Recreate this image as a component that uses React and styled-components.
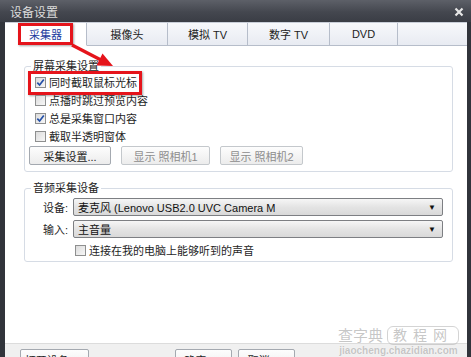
import React from "react";
import styled, { createGlobalStyle, css } from "styled-components";

const GlobalStyle = createGlobalStyle`
  html, body { margin: 0; padding: 0; background: #fff; }
  * { box-sizing: border-box; }
`;

const FONT = `"Liberation Sans", "Noto Sans CJK SC", sans-serif`;
const RED = "#e5141b";

const redBox = css`
  &::after {
    content: "";
    position: absolute;
    border: 3px solid ${RED};
    box-shadow: 1px 1px 2px rgba(0, 0, 0, 0.35);
    pointer-events: none;
  }
`;

//whole dialog with dark frame, cropped at the bottom
const Window = styled.div`
  position: relative;
  width: 471px;
  height: 357px;
  display: flex;
  flex-direction: column;
  overflow: hidden;
  background: #31343b;
  font-family: ${FONT};
  font-size: 11px;
  color: #1e1e1e;
`;

const TitleBar = styled.div`
  height: 22px;
  flex: none;
  display: flex;
  align-items: center;
  justify-content: space-between;
  padding: 1px 7px 0 10px;
  background: linear-gradient(#5d6068, #44474f 55%, #3a3d45);
  color: #dcdcdc;
  font-size: 12px;
`;

const Body = styled.div`
  flex: none;
  height: 361px;
  margin: 0 4px 0 5px;
  background: #fff;
  display: flex;
  flex-direction: column;
`;

const TabStrip = styled.div`
  display: flex;
  height: 24px;
  flex: none;
  border-top: 1px solid #c9ced8;
  background: linear-gradient(#f7f8fb, #e8ebf2);
  border-bottom: 1px solid #b6bdca;
`;

const Tab = styled.div`
  position: relative;
  width: ${(p) => (p.$width ? `${p.$width}px` : "auto")};
  flex: ${(p) => (p.$width ? "none" : "1")};
  display: flex;
  align-items: center;
  justify-content: center;
  border-right: ${(p) => (p.$last ? "none" : "1px solid #b6bdca")};
  color: #222;
  ${(p) =>
    p.$active &&
    css`
      background: #fff;
      color: #1c3c9e;
      margin-bottom: -1px;
      border-bottom: 1px solid #fff;
    `}
  ${(p) =>
    p.$marked &&
    css`
      ${redBox}
      &::after {
        left: 13px;
        right: 13px;
        top: 0;
        bottom: 0;
      }
    `}
`;

const Content = styled.div`
  flex: 1;
  min-height: 0;
  padding: 0 14px 0 19px;
`;

const Group = styled.fieldset`
  margin: ${(p) => p.$top}px 0 0;
  padding: ${(p) => p.$pad};
  border: 1px solid #d6dce5;
  border-radius: 3px;
  min-width: 0;
`;

const Legend = styled.legend`
  padding: 0 2px;
  line-height: 14px;
  color: #222;
`;

const CheckRow = styled.label`
  position: relative;
  display: flex;
  width: fit-content;
  align-items: center;
  height: 18px;
  gap: 3px;
  margin-left: ${(p) => p.$indent || 4}px;
  margin-top: ${(p) => p.$top || 0}px;
  ${(p) =>
    p.$marked &&
    css`
      ${redBox}
      &::after {
        left: -7px;
        right: -5px;
        top: -2px;
        bottom: -4px;
      }
    `}
`;

const Box = styled.span`
  width: 11px;
  height: 11px;
  flex: none;
  border: 1px solid #8e8f8f;
  background: linear-gradient(135deg, #dcdcdc, #f7f7f7);
  display: flex;
  align-items: center;
  justify-content: center;
`;

const ButtonRow = styled.div`
  display: flex;
  gap: 10px;
  margin: 1px 0 0 -2px;
`;

const Button = styled.div`
  width: ${(p) => p.$width}px;
  height: ${(p) => p.$height || 19}px;
  flex: none;
  margin-left: ${(p) => p.$gap || 0}px;
  display: flex;
  align-items: center;
  justify-content: center;
  border: 1px solid ${(p) => (p.$disabled ? "#c4c8cc" : "#a4a9b0")};
  border-radius: 2px;
  background: linear-gradient(#fdfdfd, #ececec);
  color: ${(p) => (p.$disabled ? "#8c8c8c" : "#1e1e1e")};
`;

const FieldRow = styled.div`
  display: flex;
  align-items: center;
  margin-top: ${(p) => p.$top}px;
`;

const FieldLabel = styled.span`
  width: 42px;
  flex: none;
  text-align: right;
  padding-right: 5px;
`;

const Select = styled.div`
  flex: 1;
  height: 18px;
  display: flex;
  align-items: center;
  justify-content: space-between;
  padding: 0 6px 0 4px;
  border: 1px solid #7d7f83;
  border-radius: 2px;
  background: linear-gradient(#f6f6f6, #e4e4e4 50%, #d9d9d9);
  color: #111;
  font-size: 11px;
`;

const Caret = styled.span`
  font-size: 8px;
  color: #111;
`;

const Footer = styled.div`
  flex: none;
  height: 40px;
  display: flex;
  align-items: flex-start;
  gap: 6px;
  padding: 5px 0 0 15px;
  background: #f0f0f0;
  border-top: 1px solid #dcdcdc;
`;

const Watermark = styled.div`
  position: absolute;
  right: 12px;
  bottom: 0;
  display: flex;
  flex-direction: column;
  align-items: center;
  color: rgba(150, 150, 150, 0.55);
  text-shadow: 0 0 1px #fff;
  pointer-events: none;
`;

const MarkTop = styled.div`
  display: flex;
  align-items: center;
  gap: 4px;
  font-size: 15px;
  line-height: 17px;
  span + span {
    border: 1px solid rgba(170, 170, 170, 0.5);
    border-radius: 6px;
    padding: 0 5px;
    letter-spacing: 6px;
    font-size: 14px;
  }
`;

const MarkUrl = styled.div`
  font-size: 10px;
  line-height: 12px;
  font-weight: bold;
`;

const Arrow = styled.svg`
  position: absolute;
  left: 0;
  top: 0;
  pointer-events: none;
`;

const Check = ({ checked }) => (
  <Box>
    {checked && (
      <svg width="9" height="9" viewBox="0 0 9 9">
        <path d="M1.3 4.6 L3.6 7 L7.8 1.4" fill="none" stroke="#2450a8" strokeWidth="1.7" />
      </svg>
    )}
  </Box>
);

const tabs = [
  { name: "采集器", width: 82 },
  { name: "摄像头", width: 81 },
  { name: "模拟 TV", width: 80 },
  { name: "数字 TV", width: 82 },
  { name: "DVD", width: 68 },
];

const screenOpts = [
  { text: "同时截取鼠标光标", checked: true },
  { text: "点播时跳过预览内容", checked: false },
  { text: "总是采集窗口内容", checked: true },
  { text: "截取半透明窗体", checked: false },
];

const App = () => {
  return (
    <>
      <GlobalStyle />
      <Window>
        <TitleBar>
          <span>设备设置</span>
          <svg width="10" height="10" viewBox="0 0 10 10">
            <path d="M1.5 1.5 L8.5 8.5 M8.5 1.5 L1.5 8.5" stroke="#e6e6e6" strokeWidth="2.2" />
          </svg>
        </TitleBar>
        <Body>
          <TabStrip>
            {tabs.map((t, i) => (
              <Tab key={t.name} $width={t.width} $active={i === 0} $marked={i === 0}>
                {t.name}
              </Tab>
            ))}
            <Tab $last />
          </TabStrip>
          <Content>
            <Group $top={13} $pad="0 9px 6px 6px">
              <Legend>屏幕采集设置</Legend>
              {screenOpts.map((o, i) => (
                <CheckRow key={o.text} $marked={i === 0}>
                  <Check checked={o.checked} />
                  {o.text}
                </CheckRow>
              ))}
              <ButtonRow>
                <Button $width={82}>采集设置...</Button>
                <Button $width={89} $disabled>
                  显示 照相机1
                </Button>
                <Button $width={83} $disabled>
                  显示 照相机2
                </Button>
              </ButtonRow>
            </Group>
            <Group $top={9} $pad="0 9px 2px 6px">
              <Legend>音频采集设备</Legend>
              <FieldRow $top={3}>
                <FieldLabel>设备:</FieldLabel>
                <Select>
                  <span>麦克风 (Lenovo USB2.0 UVC Camera M</span>
                  <Caret>▼</Caret>
                </Select>
              </FieldRow>
              <FieldRow $top={4}>
                <FieldLabel>输入:</FieldLabel>
                <Select>
                  <span>主音量</span>
                  <Caret>▼</Caret>
                </Select>
              </FieldRow>
              <CheckRow $indent={44} $top={3}>
                <Check />
                连接在我的电脑上能够听到的声音
              </CheckRow>
            </Group>
          </Content>
          <Footer>
            <Button $width={69} $height={22}>
              打开设备(D)
            </Button>
            <Button $width={57} $height={22} $gap={80}>
              确定(O)
            </Button>
            <Button $width={57} $height={22}>
              取消(C)
            </Button>
          </Footer>
        </Body>
        <Arrow width="471" height="357">
          <line x1="72" y1="45" x2="101" y2="60" stroke={RED} strokeWidth="3.4" />
          <polygon points="113,66 96.5,65.5 102.5,53.5" fill={RED} />
        </Arrow>
        <Watermark>
          <MarkTop>
            <span>查字典</span>
            <span>教程网</span>
          </MarkTop>
          <MarkUrl>jiaocheng.chazidian.com</MarkUrl>
        </Watermark>
      </Window>
    </>
  );
};

export default App;
